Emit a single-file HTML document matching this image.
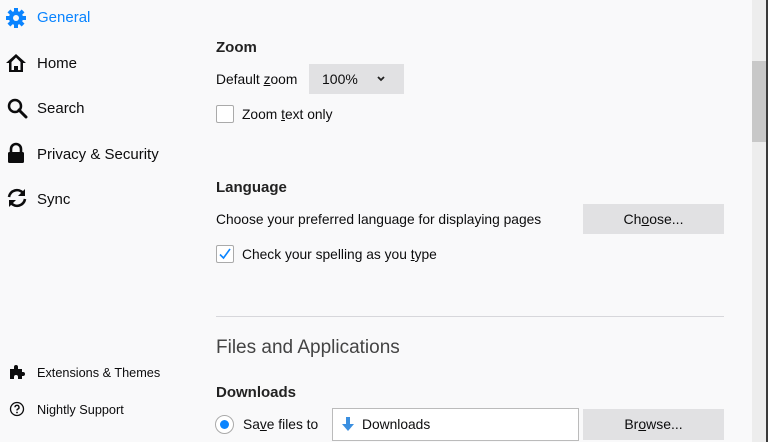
<!DOCTYPE html>
<html><head><style>
*{margin:0;padding:0;box-sizing:border-box}
body{width:768px;height:442px;overflow:hidden;background:#f9f9fa;font-family:"Liberation Sans",sans-serif;color:#0c0c0d;position:relative;font-size:14px}
.a{position:absolute;white-space:nowrap}
.nav{font-size:15px;left:37px;line-height:20px}
.h{font-weight:bold;font-size:15px;left:216px;line-height:20px;color:#222}
.t{line-height:18px;font-size:13.8px}
.btn{position:absolute;background:#e1e1e3;text-align:center;font-size:14px;line-height:30px}
.cb{position:absolute;width:18px;height:18px;border:1px solid #aaa;background:#fff;border-radius:2px}
u{text-decoration:underline}
</style></head><body>
<svg class="a" style="left:5px;top:7px" width="22" height="22" viewBox="0 0 22 22"><g fill="#0a84ff"><circle cx="11" cy="11" r="7"/><rect x="9" y="1" width="4" height="20"/><rect x="1" y="9" width="20" height="4"/><rect x="9" y="1" width="4" height="20" transform="rotate(45 11 11)"/><rect x="9" y="1" width="4" height="20" transform="rotate(-45 11 11)"/></g><circle cx="11" cy="11" r="3" fill="#f9f9fa"/></svg>
<div class="a nav" style="top:8px;color:#0a84ff">General</div>
<svg class="a" style="left:5px;top:52px" width="22" height="22" viewBox="0 0 22 22"><path d="M11 2 L1 11 L4 11 L4 20 L18 20 L18 11 L21 11 Z" fill="#0c0c0d"/><path d="M11 5.5 L6.5 10 L6.5 18 L9 18 L9 14 L13 14 L13 18 L15.5 18 L15.5 10 Z" fill="#f9f9fa"/><rect x="9.5" y="14" width="3" height="4" fill="#0c0c0d"/></svg>
<div class="a nav" style="top:54px">Home</div>
<svg class="a" style="left:6px;top:97px" width="22" height="22" viewBox="0 0 22 22"><circle cx="9" cy="9" r="6" fill="none" stroke="#0c0c0d" stroke-width="2.5"/><path d="M13 13 L20 20" stroke="#0c0c0d" stroke-width="3" stroke-linecap="round"/></svg>
<div class="a nav" style="top:99px">Search</div>
<svg class="a" style="left:6px;top:142px" width="20" height="22" viewBox="0 0 20 22"><path d="M5 10 V7 a5 5 0 0 1 10 0 V10" fill="none" stroke="#0c0c0d" stroke-width="2.6"/><rect x="2" y="10" width="16" height="11" rx="1.5" fill="#0c0c0d"/></svg>
<div class="a nav" style="top:145px">Privacy &amp; Security</div>
<svg class="a" style="left:6px;top:187px" width="22" height="22" viewBox="0 0 22 22"><path d="M3 10 A8 8 0 0 1 17 6" fill="none" stroke="#0c0c0d" stroke-width="2.6"/><path d="M19 2 L19 9 L12 9 Z" fill="#0c0c0d"/><path d="M19 12 A8 8 0 0 1 5 16" fill="none" stroke="#0c0c0d" stroke-width="2.6"/><path d="M3 20 L3 13 L10 13 Z" fill="#0c0c0d"/></svg>
<div class="a nav" style="top:190px">Sync</div>
<svg class="a" style="left:9px;top:364px" width="16" height="16" viewBox="0 0 16 16"><path d="M1 5 H5 V3 a2 2 0 0 1 4 0 V5 H13 V8 h1 a2 2 0 0 1 0 4 h-1 V15 H9 V13 a2 2 0 0 0 -4 0 V15 H1 Z" fill="#0c0c0d"/></svg>
<div class="a" style="left:37px;top:365px;font-size:12.7px;line-height:16px">Extensions &amp; Themes</div>
<svg class="a" style="left:9px;top:401px" width="16" height="16" viewBox="0 0 16 16"><circle cx="8" cy="8" r="6.5" fill="none" stroke="#0c0c0d" stroke-width="1.3"/><path d="M6 6.3 a2 2 0 1 1 2.6 1.9 c-.6.2-.6.6-.6 1.3" fill="none" stroke="#0c0c0d" stroke-width="1.4"/><circle cx="8" cy="11.5" r=".9" fill="#0c0c0d"/></svg>
<div class="a" style="left:37px;top:402px;font-size:12.7px;line-height:16px">Nightly Support</div>

<div class="a h" style="top:38px">Zoom</div>
<div class="a t" style="left:216px;top:71px">Default <u>z</u>oom</div>
<div class="btn" style="left:309px;top:64px;width:95px;height:30px;text-align:left;padding-left:13px">100%</div>
<svg class="a" style="left:376px;top:75px" width="10" height="8" viewBox="0 0 10 8"><path d="M2 2 L5 5 L8 2" fill="none" stroke="#222" stroke-width="1.8"/></svg>
<div class="cb" style="left:216px;top:105px"></div>
<div class="a t" style="left:242px;top:106px">Zoom <u>t</u>ext only</div>

<div class="a h" style="top:178px">Language</div>
<div class="a t" style="left:216px;top:211px">Choose your preferred language for displaying pages</div>
<div class="btn" style="left:583px;top:204px;width:141px;height:30px">Ch<u>o</u>ose...</div>
<div class="cb" style="left:216px;top:245px"></div>
<svg class="a" style="left:218px;top:247px" width="14" height="14" viewBox="0 0 14 14"><path d="M2 7.5 L5.5 11 L12 2" fill="none" stroke="#0a84ff" stroke-width="1.6"/></svg>
<div class="a t" style="left:242px;top:246px">Check your spelling as you <u>t</u>ype</div>

<div class="a" style="left:216px;top:316px;width:508px;height:1px;background:#d7d7db"></div>
<div class="a" style="left:216px;top:336px;font-size:19px;color:#444;line-height:24px">Files and Applications</div>
<div class="a h" style="top:383px">Downloads</div>
<div class="a" style="left:215px;top:415px;width:19px;height:19px;border:1px solid #aaa;border-radius:50%;background:#fff"></div>
<div class="a" style="left:220px;top:420px;width:9px;height:9px;border-radius:50%;background:#0a84ff"></div>
<div class="a t" style="left:243px;top:416px">Sa<u>v</u>e files to</div>
<div class="a" style="left:332px;top:408px;width:247px;height:33px;border:1px solid #bbb;background:#fff"></div>
<svg class="a" style="left:340px;top:416px" width="16" height="16" viewBox="0 0 16 16"><rect x="6" y="1" width="4" height="8" fill="#3b8fe0"/><path d="M2 8 H14 L8 15 Z" fill="#3b8fe0"/></svg>
<div class="a t" style="left:362px;top:416px">Downloads</div>
<div class="btn" style="left:583px;top:409px;width:141px;height:31px">Br<u>o</u>wse...</div>

<div class="a" style="left:752px;top:0;width:14px;height:442px;background:#ededed"></div>
<div class="a" style="left:752px;top:61px;width:14px;height:81px;background:#c8c8c8"></div>
<div class="a" style="left:766px;top:0;width:2px;height:442px;background:#3a3a3a"></div>
</body></html>
